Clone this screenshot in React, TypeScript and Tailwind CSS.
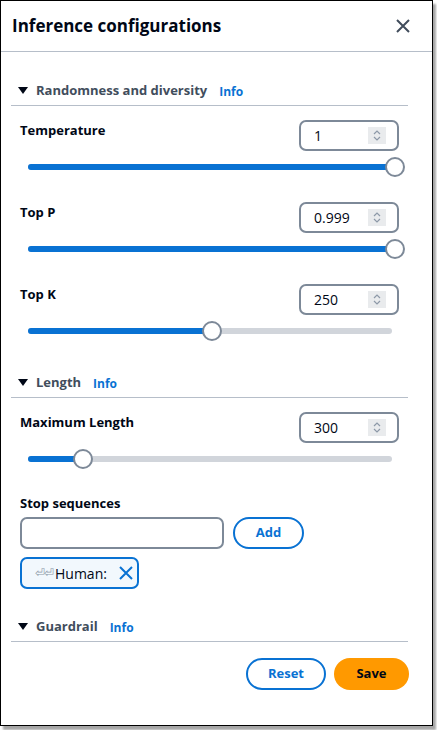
import React from 'react';

const font = { fontFamily: '"Open Sans", "Noto Sans", sans-serif' };

function Triangle() {
  return (
    <svg width="10" height="8" viewBox="0 0 10 8" className="shrink-0">
      <path d="M0 0 L10 0 L5 7 Z" fill="#000716" />
    </svg>
  );
}

function SectionHeader({ title }: { title: string }) {
  return (
    <div className="ml-[10px] mr-[24px] h-[29px] flex items-center border-b border-[#b6bec9] pl-[7px]">
      <Triangle />
      <span className="ml-[8px] text-[13px] font-bold text-[#414d5c]">{title}</span>
      <span className="ml-[12px] mt-[2px] text-[12px] font-bold text-[#0972d3]">Info</span>
    </div>
  );
}

function Spinner() {
  return (
    <div className="w-[18px] h-[17px] bg-[#e9ebed] flex items-center justify-center">
      <svg width="10" height="13" viewBox="0 0 10 13" fill="none" stroke="#8d99a8" strokeWidth="1.2">
        <path d="M2 5 L5 2 L8 5" />
        <path d="M2 8 L5 11 L8 8" />
      </svg>
    </div>
  );
}

function NumberField({ label, value }: { label: string; value: string }) {
  return (
    <div className="flex items-start justify-between">
      <span className="mt-[1px] text-[13px] font-bold text-[#000716]">{label}</span>
      <div className="w-[100px] h-[31px] border-2 border-[#7d8998] rounded-[7px] flex items-center justify-between pl-[13px] pr-[11px]">
        <span className="text-[14px] text-[#000716]">{value}</span>
        <Spinner />
      </div>
    </div>
  );
}

function Slider({ pct }: { pct: number }) {
  return (
    <div className="relative h-[20px] ml-[8px] w-[367px]">
      <div className="absolute left-0 top-[7px] h-[6px] w-[364px] rounded-full bg-[#d1d5db]" />
      <div
        className="absolute left-0 top-[7px] h-[6px] rounded-full bg-[#0972d3]"
        style={{ width: `${Math.min(pct * 3.67, 364)}px` }}
      />
      <div
        className="absolute top-0 w-[20px] h-[20px] rounded-full bg-white border-2 border-[#7d8998] -translate-x-1/2"
        style={{ left: `${pct * 3.67}px` }}
      />
    </div>
  );
}

export default function App() {
  return (
    <div className="w-[437px] h-[730px] bg-white" style={font}>
      <div className="w-[433px] h-[726px] bg-white border border-black shadow-[3px_4px_2px_rgba(0,0,0,0.35)] flex flex-col">
        <div className="h-[51px] shrink-0 flex items-center justify-between pl-[11px] pr-[21px] border-b border-[#b6bec9]">
          <h1 className="text-[17px] font-bold text-[#000716]">Inference configurations</h1>
          <svg width="16" height="16" viewBox="0 0 16 16" stroke="#414d5c" strokeWidth="2" fill="none">
            <path d="M2 2 L14 14 M14 2 L2 14" />
          </svg>
        </div>

        <div className="pt-[25px]">
          <SectionHeader title="Randomness and diversity" />
          <div className="pl-[19px] pr-[33px]">
            <div className="mt-[14px]">
              <NumberField label="Temperature" value="1" />
            </div>
            <div className="mt-[6px]">
              <Slider pct={100} />
            </div>
            <div className="mt-[25px]">
              <NumberField label="Top P" value="0.999" />
            </div>
            <div className="mt-[6px]">
              <Slider pct={100} />
            </div>
            <div className="mt-[25px]">
              <NumberField label="Top K" value="250" />
            </div>
            <div className="mt-[6px]">
              <Slider pct={50} />
            </div>
          </div>

          <div className="mt-[28px]">
            <SectionHeader title="Length" />
          </div>
          <div className="pl-[19px] pr-[33px]">
            <div className="mt-[14px]">
              <NumberField label="Maximum Length" value="300" />
            </div>
            <div className="mt-[6px]">
              <Slider pct={15} />
            </div>
            <div className="mt-[24px] text-[13px] font-bold text-[#000716] leading-[20px]">Stop sequences</div>
            <div className="mt-[4px] flex items-center gap-[9px]">
              <div className="w-[204px] h-[32px] border-2 border-[#7d8998] rounded-[7px]" />
              <button className="w-[71px] h-[32px] rounded-full border-2 border-[#0972d3] text-[13px] font-bold text-[#0972d3]">
                Add
              </button>
            </div>
            <div className="mt-[8px] w-[119px] h-[32px] rounded-[7px] border-2 border-[#0972d3] bg-[#f2f8fd] flex items-center pl-[13px] gap-[12px]">
              <span className="flex items-center text-[14px] text-[#000716]">
                <span className="text-[12px] text-[#8d99a8] tracking-[-1px] mr-[2px]">⏎⏎</span>Human:
              </span>
              <svg width="14" height="14" viewBox="0 0 14 14" stroke="#0972d3" strokeWidth="2" fill="none">
                <path d="M1 1 L13 13 M13 1 L1 13" />
              </svg>
            </div>
          </div>

          <div className="mt-[24px]">
            <SectionHeader title="Guardrail" />
          </div>
          <div className="mt-[16px] pr-[23px] flex justify-end gap-[8px]">
            <button className="w-[80px] h-[32px] rounded-full border-2 border-[#0972d3] text-[13px] font-bold text-[#0972d3]">
              Reset
            </button>
            <button className="w-[75px] h-[32px] rounded-full bg-[#ff9900] text-[13px] font-bold text-[#000716]">
              Save
            </button>
          </div>
        </div>
      </div>
    </div>
  );
}
